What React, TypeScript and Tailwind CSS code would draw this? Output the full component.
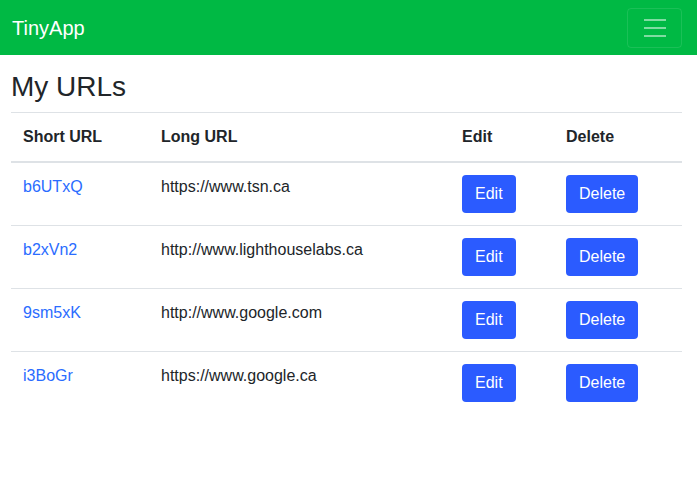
import React from "react";

const rows = [
  { s: "b6UTxQ", l: "https://www.tsn.ca" },
  { s: "b2xVn2", l: "http://www.lighthouselabs.ca" },
  { s: "9sm5xK", l: "http://www.google.com" },
  { s: "i3BoGr", l: "https://www.google.ca" },
];

export default function App() {
  return (
    <div className="min-h-[480px] bg-white text-[#212529] text-[16px] leading-[24px]" style={{ fontFamily: '"Liberation Sans", Arial, sans-serif' }}>
      <nav className="h-[55px] bg-[#00b944] flex items-center justify-between pl-[12px] pr-[15px]">
        <span className="text-white text-[20px] leading-[30px]">TinyApp</span>
        <button className="w-[55px] h-[40px] rounded-[4px] border border-white/10 flex items-center justify-center">
          <svg width="30" height="30" viewBox="0 0 30 30">
            <path d="M4 7h22M4 15h22M4 23h22" stroke="rgba(255,255,255,0.5)" strokeWidth="2" strokeLinecap="butt" />
          </svg>
        </button>
      </nav>
      <div className="ml-[11px] mr-[15px]">
        <h3 className="text-[28px] leading-[33.6px] mt-[15px] mb-[8px] font-normal">My URLs</h3>
        <table className="w-full table-fixed border-collapse">
          <colgroup>
            <col className="w-[138px]" />
            <col className="w-[301px]" />
            <col className="w-[104px]" />
            <col />
          </colgroup>
          <thead>
            <tr>
              <th className="text-left font-bold p-[12px] border-t border-[#dee2e6] border-b-2">Short URL</th>
              <th className="text-left font-bold p-[12px] border-t border-[#dee2e6] border-b-2">Long URL</th>
              <th className="text-left font-bold p-[12px] border-t border-[#dee2e6] border-b-2">Edit</th>
              <th className="text-left font-bold p-[12px] border-t border-[#dee2e6] border-b-2">Delete</th>
            </tr>
          </thead>
          <tbody>
            {rows.map((r, i) => (
              <tr key={r.s}>
                <td className={`p-[12px] align-top ${i > 0 ? "border-t border-[#dee2e6]" : ""}`}>
                  <a className="text-[#2a6cff]">{r.s}</a>
                </td>
                <td className={`p-[12px] align-top ${i > 0 ? "border-t border-[#dee2e6]" : ""}`}>{r.l}</td>
                <td className={`p-[12px] align-top ${i > 0 ? "border-t border-[#dee2e6]" : ""}`}>
                  <button className="bg-[#2b5bff] text-white rounded-[4px] h-[38px] px-[13px] leading-[24px]">Edit</button>
                </td>
                <td className={`p-[12px] align-top ${i > 0 ? "border-t border-[#dee2e6]" : ""}`}>
                  <button className="bg-[#2b5bff] text-white rounded-[4px] h-[38px] px-[13px] leading-[24px]">Delete</button>
                </td>
              </tr>
            ))}
          </tbody>
        </table>
      </div>
    </div>
  );
}
